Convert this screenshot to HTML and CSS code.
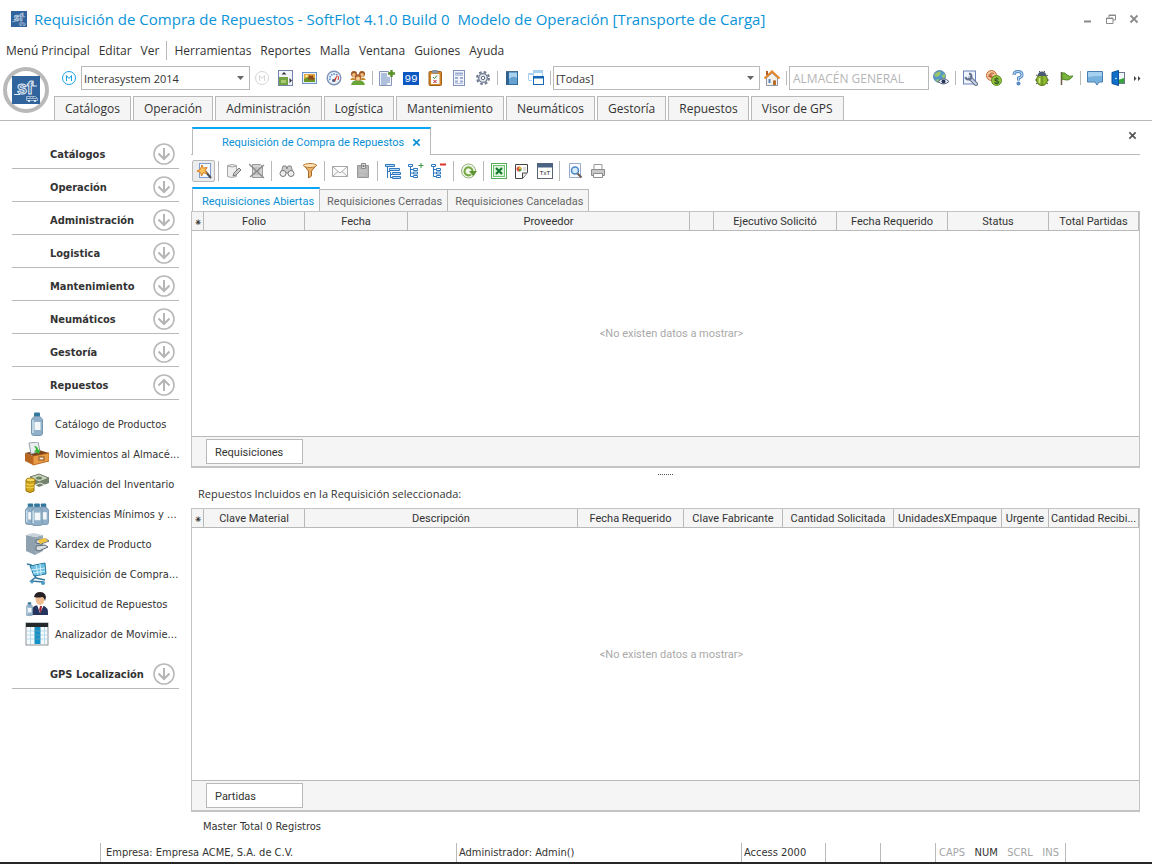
FILE: index.html
```
<!DOCTYPE html>
<html lang="es">
  <head>
    <title>Requisición de Compra de Repuestos - SoftFlot</title>
    <meta charset="utf-8" />
    <link rel="stylesheet" href="styles.css">
  </head>

  <body>
    <!-- shared symbols -->
    <svg class="defs" aria-hidden="true">
      <symbol id="logo" viewBox="0 0 28 28">
        <rect width="28" height="28" fill="#31639c" />
        <text x="5" y="18" font-family="Liberation Sans" font-size="18" font-weight="bold" fill="#31639c" stroke="#e3ebf3">sf</text>
        <path d="M2 18.500h6M21 10h4" stroke="#e3ebf3" />
        <path d="M14.500 20.500h9l2 2v2h-11zM15 22.500h10M18 20v3M21 20v3" fill="none" stroke="#9db6d0" />
        <circle cx="17" cy="25" r="1" fill="#fff" /><circle cx="23" cy="25" r="1" fill="#fff" />
      </symbol>
      <symbol id="down" viewBox="0 0 22 22">
        <circle cx="11" cy="11" r="10" fill="none" stroke="#b9b9b9" stroke-width="1.600" />
        <path d="M11 5v10M5.500 10.500l5.500 5.500 5.500-5.500" fill="none" stroke="#b5b5b5" stroke-width="2" />
      </symbol>
      <symbol id="up" viewBox="0 0 22 22">
        <circle cx="11" cy="11" r="10" fill="none" stroke="#b9b9b9" stroke-width="1.600" />
        <path d="M11 17V7M5.500 11.500L11 6l5.500 5.500" fill="none" stroke="#b5b5b5" stroke-width="2" />
      </symbol>
      <symbol id="close" viewBox="0 0 10 10">
        <path d="M1.500 1.500l7 7M8.500 1.500l-7 7" fill="none" stroke="currentColor" stroke-width="1.800" />
      </symbol>
      <symbol id="bottle" viewBox="0 0 12 24">
        <rect x="3" y="0.500" width="6" height="4" rx="1" fill="#33779d" />
        <path d="M3 4.500h6l2.500 3V21q0 2.500-2.500 2.500H3Q.5 23.500.5 21V7.500z" fill="#8fb0c8" stroke="#7897ae" />
        <path d="M2 8v13" stroke="#cfe0ec" stroke-width="1.500" />
        <rect x="3.500" y="10" width="6" height="8" fill="#f4f7fa" />
      </symbol>
    </svg>

    <header>
      <div class="titlebar">
        <svg class="app-icon"><use href="#logo" /></svg>
        <h1>Requisición de Compra de Repuestos - SoftFlot 4.1.0 Build 0&nbsp; Modelo de Operación [Transporte de Carga]</h1>
        <div class="window-buttons">
          <button type="button" aria-label="Minimizar"><svg viewBox="0 0 10 10"><path d="M1 7.500h7" stroke="#8a8a8a" stroke-width="2" /></svg></button>
          <button type="button" aria-label="Restaurar"><svg viewBox="0 0 10 10"><path d="M3 3V1h6.500v5H7M3 1.500h6.500M.5 4H7v5.500H.5zM.5 4.500H7" fill="none" stroke="#8a8a8a" /></svg></button>
          <button type="button" aria-label="Cerrar"><svg><use href="#close" /></svg></button>
        </div>
      </div>

      <nav class="menu">
        <a href="#">Menú Principal</a>
        <a href="#">Editar</a>
        <a href="#">Ver</a>
        <span class="menu-sep"></span>
        <a href="#">Herramientas</a>
        <a href="#">Reportes</a>
        <a href="#">Malla</a>
        <a href="#">Ventana</a>
        <a href="#">Guiones</a>
        <a href="#">Ayuda</a>
      </nav>

      <div class="ribbon">
        <div class="brand"><svg><use href="#logo" /></svg></div>
        <div class="ribbon-main">
          <div class="toolbar">
            <button type="button" aria-label="Modelo"><svg viewBox="0 0 16 16"><circle cx="8" cy="8" r="6.500" fill="none" stroke="#1ba1e2" /><path d="M5.500 11V5.500L8 8.500l2.500-3V11" fill="none" stroke="#1ba1e2" /></svg></button>
            <select class="combo combo-model" aria-label="Modelo de operación"><option>Interasystem 2014</option></select>
            <button type="button" disabled aria-label="Modelo inactivo"><svg viewBox="0 0 16 16"><circle cx="8" cy="8" r="6.500" fill="none" stroke="#d5d5d5" /><path d="M5.500 11V5.500L8 8.500l2.500-3V11" fill="none" stroke="#d5d5d5" /></svg></button>
            <button type="button" aria-label="Tamaño"><svg viewBox="0 0 16 16"><rect x=".5" y=".5" width="14" height="15" fill="#f2f4fb" stroke="#7483ae" /><rect x="1" y="7" width="9" height="8" fill="#74a441" /><rect x="3" y="10" width="5" height="3" fill="#a7ca73" /><path d="M3.500 4.500L6 2l2.500 2.500zM11.500 8l2.500 2.500-2.500 2.500z" fill="#333" /></svg></button>
            <button type="button" aria-label="Imagen"><svg viewBox="0 0 16 16"><rect x=".5" y="2.500" width="14" height="11" fill="#eaf0fa" stroke="#6d93c6" /><rect x="2" y="4" width="11" height="8" fill="#e2a63b" /><path d="M2 9l4-2 4 3 3-2v4H2z" fill="#6a9429" /><path d="M7 5l2 1 2-1v2l2 2-3 1-2-1-2 1z" fill="#8c4a1c" /><circle cx="4.500" cy="6" r="1.200" fill="#fff3b0" /></svg></button>
            <button type="button" aria-label="Tablero"><svg viewBox="0 0 16 16"><circle cx="8" cy="8" r="6.800" fill="#eef4fb" stroke="#7f92b5" stroke-width="1.400" /><path d="M4 10a4.500 4.500 0 0 1 7-5" fill="none" stroke="#4d88cc" stroke-width="1.500" stroke-dasharray="1.500 1" /><path d="M7 11l5-7-3 8z" fill="#d9351f" /><path d="M12 6q1 2 0 4" fill="none" stroke="#c33" /><circle cx="7.500" cy="10.500" r="1.500" fill="#4f5f82" /></svg></button>
            <button type="button" aria-label="Usuarios"><svg viewBox="0 0 16 16"><path d="M0 10q3-5 6 0zM10 10q3-5 6 0z" fill="#c98b2c" /><circle cx="4" cy="4" r="3" fill="#9d5623" /><circle cx="12" cy="4" r="3" fill="#9d5623" /><circle cx="4" cy="5" r="1.900" fill="#f0bc80" /><circle cx="12" cy="5" r="1.900" fill="#f0bc80" /><path d="M1 15q1-5 7-5t7 5z" fill="#6ba538" /><circle cx="8" cy="7.500" r="3.300" fill="#aa6027" /><circle cx="8" cy="8.600" r="2.200" fill="#f5c992" /></svg></button>
            <span class="sep"></span>
            <button type="button" aria-label="Nuevo"><svg viewBox="0 0 16 16"><path d="M.5 1.500h9l3 3v11H.5z" fill="#f2f4fa" stroke="#8694b8" /><path d="M2 4h6M2 6h6M2 8h9M2 10h9M2 12h9M2 14h6" stroke="#6c8cc0" /><path d="M12.500 0v7M9 3.500h7" stroke="#589025" stroke-width="2.400" /></svg></button>
            <button type="button" aria-label="Contador"><svg viewBox="0 0 16 16"><rect y="2" width="16" height="13" fill="#0b57c2" /><text x="8" y="12" text-anchor="middle" font-family="Liberation Mono" font-size="11" fill="#f4f8ff">99</text></svg></button>
            <button type="button" aria-label="Verificar"><svg viewBox="0 0 16 16"><rect x="2" y="1.500" width="12.500" height="14" rx="1" fill="#d48627" stroke="#9f5e19" /><rect x="4" y="4" width="8.500" height="10" fill="#f7f7f5" /><rect x="5" y="0" width="6" height="3.500" rx="1" fill="#8a929e" /><path d="M6 7l1.500 1.500L10 5.500" fill="none" stroke="#318a38" /><path d="M6.500 10l3 3M9.500 10l-3 3" stroke="#b23" /></svg></button>
            <button type="button" aria-label="Formulario"><svg viewBox="0 0 16 16"><rect x="2.500" y=".5" width="11" height="15" fill="#f4f6fc" stroke="#8091ba" /><path d="M4 3.500h8M4 11.500h3M9 11.500h3M4 8h3M9 8h3" stroke="#9aabd0" stroke-width="2" /><path d="M4 5.500h8M4 13.500h8" stroke="#b8c4df" /></svg></button>
            <button type="button" aria-label="Configuración"><svg viewBox="0 0 16 16"><circle cx="8" cy="8" r="6" fill="none" stroke="#6f7a91" stroke-width="2" stroke-dasharray="2.700 2" /><circle cx="8" cy="8" r="4.300" fill="#e4e8f0" stroke="#6f7a91" stroke-width="1.300" /><circle cx="8" cy="8" r="1.700" fill="#fff" stroke="#5f6b83" /></svg></button>
            <span class="sep"></span>
            <button type="button" aria-label="Libro"><svg viewBox="0 0 16 16"><path d="M2 1h2v14H2z" fill="#315f8b" /><rect x="4.500" y="1.500" width="9" height="13" fill="#67a1cf" stroke="#2d6b9f" /><path d="M5 3h8v5q-4-3-8 1z" fill="#a9d0ec" /><path d="M2 1.500h11" stroke="#4c6c8c" /></svg></button>
            <button type="button" aria-label="Ventanas"><svg viewBox="0 0 16 16"><rect x="5.500" y=".5" width="9" height="7" fill="#f6fbff" stroke="#a9d0ee" /><path d="M5 2h10" stroke="#a9d0ee" stroke-width="2" /><path d="M.5 10.500v-7H5" fill="none" stroke="#a9d0ee" /><path d="M0 4.500h5M1 10.500h3" stroke="#a9d0ee" /><rect x="5.500" y="6.500" width="10" height="8" fill="#fff" stroke="#1567b5" /><path d="M5 7.500h11" stroke="#1567b5" stroke-width="2" /></svg></button>
            <span class="sep"></span>
            <select class="combo combo-all" aria-label="Filtro"><option>[Todas]</option></select>
            <button type="button" aria-label="Inicio"><svg viewBox="0 0 16 16"><path d="M2.500 8L8 3l5.500 5v7.500h-11z" fill="#f5f2eb" stroke="#8f97a8" /><path d="M.5 8.500L8 1.500l7.500 7" fill="none" stroke="#e58a2b" stroke-width="2.200" /><path d="M3 1v4" stroke="#b45e2e" stroke-width="2" /><path d="M9 15v-4q1.500-2 3 0v4z" fill="#b96d2c" /><path d="M4 10h3M4 12h3M5.500 9v4" stroke="#5e83b9" /></svg></button>
            <span class="sep"></span>
            <input class="store" type="text" aria-label="Almacén" placeholder="ALMACÉN GENERAL" />
            <button type="button" aria-label="Vista web"><svg viewBox="0 0 16 16"><circle cx="6.500" cy="6.500" r="6" fill="#5599c8" stroke="#658ca7" /><path d="M3 3q4-3 5 0L6 6 3 7 1 5zM9 5l3-1v3l-2 2zM4 9l3 1-1 2.500-3-2z" fill="#9cc66a" /><path d="M5 11.500q5.500-5.500 11 0-5.500 5-11 0z" fill="#e6ebf2" stroke="#5b6680" /><circle cx="10.500" cy="11.500" r="2" fill="#26345a" /></svg></button>
            <span class="sep"></span>
            <button type="button" aria-label="Herramienta"><svg viewBox="0 0 16 16"><rect x="1.500" y="1" width="12" height="13" fill="#eef3fc" stroke="#6a82b7" /><path d="M8 8l6 6" stroke="#66738f" stroke-width="4" stroke-linecap="round" /><path d="M7 7l7 7" stroke="#c8d0e0" stroke-width="2" stroke-linecap="round" /><path d="M7 3.500A3 3 0 1 1 3.500 7" fill="none" stroke="#66738f" stroke-width="2" /></svg></button>
            <button type="button" aria-label="Monedas"><svg viewBox="0 0 16 16"><circle cx="5.500" cy="5.500" r="5" fill="#f4c79d" stroke="#c86a34" /><path d="M8 3.500Q4 2 4 5.500T8 7.500M2.500 5h4M2.500 6.500h4" fill="none" stroke="#b4552a" /><circle cx="10.500" cy="10.500" r="5" fill="#92c13e" stroke="#5e922a" /><text x="10.500" y="14" text-anchor="middle" font-family="Liberation Sans" font-size="9" font-weight="bold" fill="#29541a">$</text></svg></button>
            <button type="button" aria-label="Ayuda"><svg viewBox="0 0 16 16"><path d="M4 5q0-3.500 4-3.500T12 5Q12 7 8.500 8v2.500" fill="none" stroke="#4f86c0" stroke-width="3" /><path d="M4 5q0-3.500 4-3.500T12 5Q12 7 8.500 8v2.500" fill="none" stroke="#b5d5f2" stroke-width="1.200" /><circle cx="8.500" cy="13.500" r="1.700" fill="#5b91cb" stroke="#376ba8" stroke-width=".5" /></svg></button>
            <button type="button" aria-label="Depurar"><svg viewBox="0 0 16 16"><path d="M2 5l3 2M14 5l-3 2M1 10h3M15 10h-3M2 14l3-2M14 14l-3-2M5 1l2 2M11 1L9 3" stroke="#4d5c44" /><ellipse cx="8" cy="10" rx="5.500" ry="5.500" fill="#8db72f" stroke="#587821" /><path d="M3.500 6Q4 1.500 8 1.500T12.500 6z" fill="#4a5a73" /><path d="M8 6v9" stroke="#577820" /><path d="M5.500 8v5" stroke="#d4ea84" stroke-width="1.500" /></svg></button>
            <button type="button" aria-label="Bandera"><svg viewBox="0 0 16 16"><path d="M3.500 2v13" stroke="#6c5a48" stroke-width="1.500" /><path d="M4 3q3-1 5 2 2 2 6 1-2 3-5 4-3 0-6-1z" fill="#7cb33a" stroke="#4c8626" /></svg></button>
            <span class="sep"></span>
            <button type="button" aria-label="Mensajes"><svg viewBox="0 0 16 16"><path d="M.5 1.500h15v10.500h-3.500l-2 3-2-3H.5z" fill="#77b1de" stroke="#4a7eb0" /><path d="M1 2h14v4q-7 0-14 1z" fill="#a5d0ef" /></svg></button>
            <button type="button" aria-label="Salir"><svg viewBox="0 0 16 16"><rect x="6.500" y="2.500" width="7" height="11" fill="#f3f6f9" stroke="#6b7888" /><path d="M7 10l6-2v5H7z" fill="#39a53e" /><path d="M1 2.500L7.500.5v15L1 13.500z" fill="#0f6fc8" stroke="#0a4f97" /><circle cx="5" cy="8.500" r=".8" fill="#fff" /></svg></button>
            <button type="button" class="more" aria-label="Más"><svg viewBox="0 0 8 5"><path d="M1 0l2.500 2.500L1 5zM5 0l2.500 2.500L5 5z" fill="#444" /></svg></button>
          </div>

          <nav class="modules">
            <a href="#">Catálogos</a>
            <a href="#">Operación</a>
            <a href="#">Administración</a>
            <a href="#">Logística</a>
            <a href="#">Mantenimiento</a>
            <a href="#">Neumáticos</a>
            <a href="#">Gestoría</a>
            <a href="#">Repuestos</a>
            <a href="#">Visor de GPS</a>
          </nav>
        </div>
      </div>
    </header>

    <div class="workspace">
      <aside class="sidebar">
        <button type="button" class="group">Catálogos<svg><use href="#down" /></svg></button>
        <button type="button" class="group">Operación<svg><use href="#down" /></svg></button>
        <button type="button" class="group">Administración<svg><use href="#down" /></svg></button>
        <button type="button" class="group">Logistica<svg><use href="#down" /></svg></button>
        <button type="button" class="group">Mantenimiento<svg><use href="#down" /></svg></button>
        <button type="button" class="group">Neumáticos<svg><use href="#down" /></svg></button>
        <button type="button" class="group">Gestoría<svg><use href="#down" /></svg></button>
        <button type="button" class="group" aria-expanded="true">Repuestos<svg><use href="#up" /></svg></button>
        <ul class="items">
          <li><a href="#">
            <svg viewBox="0 0 24 24"><use href="#bottle" x="6" y="0" width="12" height="24" /></svg>
            <span>Catálogo de Productos</span></a></li>
          <li><a href="#">
            <svg viewBox="0 0 24 24"><path d="M0 11l8 3v9l-8-4z" fill="#b96620" /><path d="M8 14l16-3v8L8 23z" fill="#e99a45" stroke="#bd6c24" /><path d="M0 11l14-3 10 3-16 3z" fill="#7f451a" /><path d="M4 1l9-1 2 9-9 3z" fill="#e9edef" stroke="#9aa3a8" /><path d="M9 4q4 0 4 4l2-1-1 5-5-3 2-1q0-2-2-4z" fill="#35b433" /><rect x="14" y="15" width="5" height="3" fill="#f6e8cf" stroke="#865022" /></svg>
            <span>Movimientos al Almacé...</span></a></li>
          <li><a href="#">
            <svg viewBox="0 0 24 24"><path d="M5 5l9-3 10 4v5l-10 4-9-5z" fill="#74836d" /><path d="M5 5l9-3 10 4-10 4z" fill="#c8d2c0" stroke="#728069" /><ellipse cx="14" cy="6" rx="3" ry="1.500" fill="#6d8360" /><path d="M10 13l5-2 5 2" stroke="#e5ece0" fill="none" /><path d="M1 8h9v3l-1 2v6q-4 3-8 0v-6z" fill="#d2a719" stroke="#9c750e" /><ellipse cx="5.500" cy="8" rx="4.500" ry="2" fill="#f5d961" stroke="#a77f14" /><path d="M1 12q4 2 8 0M1 15q4 2 8 0" stroke="#f4d75a" fill="none" /></svg>
            <span>Valuación del Inventario</span></a></li>
          <li><a href="#">
            <svg viewBox="0 0 24 24"><use href="#bottle" x="0" y="1" width="11" height="22" /><use href="#bottle" x="13" y="1" width="11" height="22" /><use href="#bottle" x="6" y="1" width="12" height="23" /></svg>
            <span>Existencias Mínimos y ...</span></a></li>
          <li><a href="#">
            <svg viewBox="0 0 24 24"><path d="M10 5l8-2v16l-8 4z" fill="#9aabb7" /><path d="M1 3l9 2v18l-9-4z" fill="#8fa1ae" /><path d="M1 3l7-2 10 2-8 2z" fill="#c7d2d9" /><path d="M11 8l10-1 3 2-8 3-5-1zM11 14l9-1 3 2-9 4-3-1z" fill="#d7dde1" stroke="#5b6972" /><path d="M13 8l7-2 3 3-8 3z" fill="#f0c43d" /></svg>
            <span>Kardex de Producto</span></a></li>
          <li><a href="#">
            <svg viewBox="0 0 24 24"><path d="M2 2l4 1 5 13 9 2" fill="none" stroke="#36779c" stroke-width="1.500" /><path d="M5 4l15-3 1 11-12 2z" fill="#6cbfe2" stroke="#27789f" /><path d="M6 8l14-2M8 11l12-2M11 3l2 10M15 2l1 11" stroke="#d3f1fc" /><path d="M11 15l-5 4 12 1" fill="none" stroke="#36779c" stroke-width="1.500" /><circle cx="7" cy="20" r="1.500" fill="#4b9cc2" /><circle cx="18" cy="21" r="2" fill="#4b9cc2" /></svg>
            <span>Requisición de Compra...</span></a></li>
          <li><a href="#">
            <svg viewBox="0 0 24 24"><path d="M6 23q-1-9 7-10l4 0q7 2 6 10z" fill="#26335f" /><path d="M12 13l3 8 4-8z" fill="#fff" /><path d="M15 14l-1 4 2 3 1-7z" fill="#a72635" /><ellipse cx="15" cy="7" rx="4.500" ry="6" fill="#efbc91" /><path d="M9 5q1-5 6-5t6 5l-1 4q-1-4-3-4-4 1-8 0z" fill="#272125" /><use href="#bottle" x="1" y="10" width="7" height="14" /></svg>
            <span>Solicitud de Repuestos</span></a></li>
          <li><a href="#">
            <svg viewBox="0 0 24 24"><rect x="1" y="1" width="22" height="22" fill="#f7fafc" stroke="#8b9499" /><path d="M1 3h22" stroke="#24292c" stroke-width="4" /><path d="M9.500 5h6v17h-6z" fill="#1592c5" /><path d="M2 9h20M2 13h20M2 17h20M5.500 5v17M19.500 5v17" stroke="#b6dced" /><path d="M9.500 9h6M9.500 13h6M9.500 17h6" stroke="#0874a7" /></svg>
            <span>Analizador de Movimie...</span></a></li>
        </ul>
        <button type="button" class="group">GPS Localización<svg><use href="#down" /></svg></button>
      </aside>

      <main>
        <div class="doc-tabs">
          <div class="doc-tab">
            <span>Requisición de Compra de Repuestos</span>
            <button type="button" aria-label="Cerrar pestaña"><svg><use href="#close" /></svg></button>
          </div>
          <button type="button" class="doc-close" aria-label="Cerrar documento"><svg><use href="#close" /></svg></button>
        </div>

        <div class="doc-toolbar">
          <button type="button" class="active" aria-label="Asistente"><svg viewBox="0 0 16 16"><rect x="3.500" y=".5" width="11" height="14" fill="#f4f7fc" stroke="#7f9dce" /><path d="M9 8l6 7" stroke="#4d4d4d" stroke-width="2" /><path d="M6 2l1.300 3.200 3.700-.7-1.800 3 1.800 3-3.700-.7L5.500 13l-.8-3.500L1 8l3.500-1.800z" fill="#fbc55a" stroke="#d97b1f" /></svg></button>
          <span class="sep"></span>
          <button type="button" aria-label="Editar"><svg viewBox="0 0 16 16"><path d="M1.500 2.500q5-2 9 0v11q-5 2-9 0z" fill="#eee" stroke="#a5a5a5" /><path d="M1.500 3q5 2 9 0" fill="none" stroke="#a5a5a5" /><path d="M7 13l1-3 5-5 2 2-5 5z" fill="#ccc" stroke="#777" /></svg></button>
          <button type="button" aria-label="Eliminar"><svg viewBox="0 0 16 16"><path d="M3.500 1.500h8l2 2v11h-10z" fill="#d5d5d5" stroke="#9a9a9a" /><path d="M5 5h6M5 8h6M5 11h6" stroke="#aaa" /><path d="M0 1l15 14M15 2L1 14" stroke="#888" stroke-width="1.300" /></svg></button>
          <span class="sep"></span>
          <button type="button" aria-label="Buscar"><svg viewBox="0 0 16 16"><path d="M4 3h3l1 3 1-3h3l2 7H2z" fill="#ccc" stroke="#888" /><circle cx="4" cy="10.500" r="3" fill="#eee" stroke="#777" /><circle cx="12" cy="10.500" r="3" fill="#eee" stroke="#777" /></svg></button>
          <button type="button" aria-label="Filtrar"><svg viewBox="0 0 16 16"><path d="M1.500 2l5 6v7l3-2V8l5-6z" fill="#e9b067" stroke="#a96a29" /><ellipse cx="8" cy="2.500" rx="6.500" ry="2" fill="#fae0b4" stroke="#b87a37" /></svg></button>
          <span class="sep"></span>
          <button type="button" aria-label="Correo"><svg viewBox="0 0 16 16"><path d="M.5 3.500h15v10H.5zM.5 3.500L8 10l7.500-6.500M.5 13.500L6 8.500M15.500 13.500L10 8.500" fill="#fafafa" stroke="#a8a8a8" /></svg></button>
          <button type="button" aria-label="Nota"><svg viewBox="0 0 16 16"><path d="M2.500 2.500h11v12h-11z" fill="#b5b5b5" stroke="#999" /><path d="M4 7h8M4 9h8M4 12h6" stroke="#c8c8c8" /><path d="M6.500.5h4v5h-4z" fill="#ddd" stroke="#888" /><circle cx="8.500" cy="3" r="1" fill="#666" /></svg></button>
          <span class="sep"></span>
          <button type="button" aria-label="Árbol"><svg viewBox="0 0 16 16"><path d="M2.500 4v11M2.500 8.500H5M5.500 9v6M5 11.500h2M5 14.500h2" fill="none" stroke="#2d78c0" /><path d="M.5 1.500h9v2h-9zM4.500 5.500h10v2h-10zM7.500 9.500h8v2h-8zM7.500 13.500h8v2h-8z" fill="#b9d9f5" stroke="#2d78c0" /></svg></button>
          <button type="button" aria-label="Expandir"><svg viewBox="0 0 16 16"><path d="M2.500 4v9.500H6M2.500 6.500H6M2.500 10H6" fill="none" stroke="#2d78c0" /><path d="M.5 1.500h4v2h-4zM5.500 5.500h4v2h-4zM5.500 9h4v2h-4zM5.500 12.500h4v2h-4z" fill="#fff" stroke="#2d78c0" /><path d="M13 0v5M10.500 2.500h5" stroke="#3f9745" /></svg></button>
          <button type="button" aria-label="Contraer"><svg viewBox="0 0 16 16"><path d="M2.500 4v9.500H6M2.500 6.500H6M2.500 10H6" fill="none" stroke="#2d78c0" /><path d="M.5 1.500h4v2h-4zM5.500 5.500h4v2h-4zM5.500 9h4v2h-4zM5.500 12.500h4v2h-4z" fill="#fff" stroke="#2d78c0" /><path d="M9 1.500h6" stroke="#db332a" stroke-width="2" /></svg></button>
          <span class="sep"></span>
          <button type="button" aria-label="Actualizar"><svg viewBox="0 0 16 16"><circle cx="7.500" cy="8" r="7" fill="#f1f6ea" stroke="#94b17b" /><path d="M10 11.500A4 4 0 1 1 11.500 8" fill="none" stroke="#75a840" stroke-width="2" /><path d="M8 8h8l-4 5z" fill="#5f9430" /></svg></button>
          <span class="sep"></span>
          <button type="button" aria-label="Exportar a Excel"><svg viewBox="0 0 16 16"><rect x=".5" y=".5" width="15" height="15" fill="#fff" stroke="#55ad57" /><rect x="2.500" y="2.500" width="11" height="11" fill="#d9f2d9" stroke="#6cc26e" /><path d="M5 5l6 6M11 5l-6 6" stroke="#127b2c" stroke-width="2.200" /></svg></button>
          <button type="button" aria-label="Exportar reporte"><svg viewBox="0 0 16 16"><path d="M1.500 1.500h12v8l-5 6h-7z" fill="#fff" stroke="#444" /><path d="M8.500 15v-5H13" fill="#eee" stroke="#444" /><circle cx="5" cy="6" r="2.500" fill="#e5533f" /><path d="M5 6h2.500A2.500 2.500 0 0 1 5 8.500z" fill="#4ca94f" /><path d="M5 6V3.500A2.500 2.500 0 0 1 7.500 6z" fill="#eab33b" /><path d="M9 5h3M9 7h3" stroke="#bbb" /></svg></button>
          <button type="button" aria-label="Exportar a texto"><svg viewBox="0 0 16 16"><rect x=".5" y=".5" width="15" height="15" fill="#fff" stroke="#5b6470" /><path d="M0 2.500h16" stroke="#4a6384" stroke-width="4" /><text x="8" y="12" text-anchor="middle" font-family="Liberation Sans" font-size="6" fill="#222">TxT</text></svg></button>
          <span class="sep"></span>
          <button type="button" aria-label="Vista previa"><svg viewBox="0 0 16 16"><path d="M2.500.5h11v14h-11z" fill="#f8faff" stroke="#98abc9" /><circle cx="8" cy="7.500" r="3.500" fill="#d7ebfb" stroke="#4b85c4" stroke-width="1.500" /><path d="M10.500 10.500l4 4" stroke="#6c5b50" stroke-width="2" /></svg></button>
          <button type="button" aria-label="Imprimir"><svg viewBox="0 0 16 16"><path d="M4 7V1.500h8V7" fill="#fff" stroke="#999" /><path d="M1.500 6.500h13v6h-13z" fill="#c9c9c9" stroke="#8d8d8d" /><path d="M3.500 10.500h9v4h-9z" fill="#fff" stroke="#8d8d8d" /></svg></button>
        </div>

        <div class="sub-tabs">
          <a href="#" class="selected">Requisiciones Abiertas</a>
          <a href="#">Requisiciones Cerradas</a>
          <a href="#">Requisiciones Canceladas</a>
        </div>

        <section class="grid grid-top">
          <table>
            <colgroup>
              <col class="w-mark" /><col class="w-101" /><col class="w-103" /><col /><col class="w-24" /><col class="w-123" /><col class="w-111" /><col class="w-101" /><col class="w-90" />
            </colgroup>
            <thead>
              <tr>
                <th>⁕</th>
                <th>Folio</th>
                <th>Fecha</th>
                <th>Proveedor</th>
                <th></th>
                <th>Ejecutivo Solicitó</th>
                <th>Fecha Requerido</th>
                <th>Status</th>
                <th>Total Partidas</th>
              </tr>
            </thead>
          </table>
          <p class="empty">&lt;No existen datos a mostrar&gt;</p>
          <div class="levels"><button type="button">Requisiciones</button></div>
        </section>

        <div class="splitter"></div>
        <h2>Repuestos Incluidos en la Requisición seleccionada:</h2>

        <section class="grid grid-bottom">
          <table>
            <colgroup>
              <col class="w-mark" /><col class="w-101" /><col /><col class="w-106" /><col class="w-99" /><col class="w-111" /><col class="w-108" /><col class="w-47" /><col class="w-90" />
            </colgroup>
            <thead>
              <tr>
                <th>⁕</th>
                <th>Clave Material</th>
                <th>Descripción</th>
                <th>Fecha Requerido</th>
                <th>Clave Fabricante</th>
                <th>Cantidad Solicitada</th>
                <th>UnidadesXEmpaque</th>
                <th>Urgente</th>
                <th>Cantidad Recibi...</th>
              </tr>
            </thead>
          </table>
          <p class="empty">&lt;No existen datos a mostrar&gt;</p>
          <div class="levels"><button type="button">Partidas</button></div>
        </section>

        <p class="totals">Master Total 0 Registros</p>
      </main>
    </div>

    <footer>
      <div class="cell cell-first"></div>
      <div class="cell cell-company">Empresa: Empresa ACME, S.A. de C.V.</div>
      <div class="cell cell-user">Administrador: Admin()</div>
      <div class="cell cell-db">Access 2000</div>
      <div class="cell cell-small"></div>
      <div class="cell cell-small"></div>
      <div class="cell cell-keys"><span>CAPS</span><span class="on">NUM</span><span>SCRL</span><span>INS</span></div>
      <div class="cell cell-last"></div>
    </footer>
  </body>
</html>
```

FILE: styles.css
```
* {
  box-sizing: border-box;
}

body {
  margin: 0;
  min-height: 100vh;
  display: flex;
  flex-direction: column;
  background: #fff;
  color: #333;
  font-family: "Open Sans", "Segoe UI", sans-serif;
  font-size: 12px;
}

a {
  color: inherit;
  text-decoration: none;
}

button {
  padding: 0;
  border: none;
  background: none;
  color: inherit;
  font: inherit;
}

h1,
h2,
p,
ul {
  margin: 0;
  padding: 0;
  font-weight: normal;
  list-style: none;
}

svg {
  display: block;
  flex: none;
}

.defs {
  position: absolute;
  width: 0;
  height: 0;
}

/* title bar and menu */

.titlebar {
  display: flex;
  align-items: center;
  height: 37px;
  padding: 0 13px 0 11px;
}

.app-icon {
  width: 16px;
  height: 16px;
}

h1 {
  margin-left: 7px;
  color: #0a93d8;
  font-size: 15px;
  line-height: 20px;
  white-space: nowrap;
}

.window-buttons {
  display: flex;
  gap: 13px;
  margin-left: auto;
  color: #8a8a8a;
}

.window-buttons svg {
  width: 10px;
  height: 10px;
}

.menu {
  display: flex;
  align-items: center;
  gap: 9px;
  height: 27px;
  padding-left: 6px;
}

.menu-sep {
  width: 1px;
  height: 19px;
  margin: 0 -2px;
  background: #b9b9b9;
}

.ribbon {
  display: flex;
  height: 57px;
  border-bottom: 1px solid #b9b9b9;
}

.brand {
  display: flex;
  align-items: center;
  justify-content: center;
  width: 46px;
  height: 46px;
  margin: 3px 5px 0 3px;
  border: 4px solid #b9b9b9;
  border-radius: 50%;
}

.brand svg {
  width: 28px;
  height: 28px;
}

.ribbon-main {
  display: flex;
  flex: 1;
  flex-direction: column;
  justify-content: space-between;
}

.toolbar,
.doc-toolbar {
  display: flex;
  align-items: center;
}

.toolbar {
  height: 28px;
  padding: 0 9px 0 3px;
}

.toolbar button,
.doc-toolbar button {
  display: flex;
  align-items: center;
  justify-content: center;
  width: 24px;
  height: 22px;
}

.toolbar svg,
.doc-toolbar svg {
  width: 16px;
  height: 16px;
}

.toolbar .more {
  width: 12px;
}

.toolbar .more svg {
  width: 8px;
  height: 5px;
}

.sep {
  width: 1px;
  height: 14px;
  margin: 0 2px;
  background: #b9b9b9;
}

.combo,
.store {
  height: 24px;
  padding: 0 3px;
  border: 1px solid #b9b9b9;
  border-radius: 0;
  color: #333;
  font: inherit;
}

.combo {
  padding: 0 2px;
  appearance: none;
  background: #fff url("data:image/svg+xml,%3Csvg xmlns='http://www.w3.org/2000/svg' width='7' height='4'%3E%3Cpath d='M0 0h7L3.500 4z' fill='%23666'/%3E%3C/svg%3E") no-repeat right 5px center;
  font-size: 11px;
}

.combo-model {
  width: 169px;
}

.combo-all {
  flex: 1;
}

.store {
  width: 140px;
}

.store::placeholder {
  color: #b5b5b5;
}

.modules {
  display: flex;
  gap: 2px;
}

.modules a {
  padding: 1px 10px 0;
  border: 1px solid #b9b9b9;
  border-bottom: none;
  background: #f5f5f5;
  line-height: 22px;
}

/* sidebar */

.workspace {
  display: flex;
  flex: 1;
}

.sidebar {
  width: 167px;
  margin: 15px 12px 0;
  font-family: "DejaVu Sans Condensed", Tahoma, sans-serif;
  font-size: 11px;
}

.group {
  display: flex;
  align-items: center;
  justify-content: space-between;
  width: 100%;
  height: 33px;
  padding: 4px 4px 0 38px;
  border-bottom: 1px solid #b9b9b9;
  font-weight: bold;
  white-space: nowrap;
}

.group svg {
  width: 22px;
  height: 22px;
}

.items {
  padding: 9px 0 7px 13px;
}

.items a {
  display: flex;
  align-items: center;
  gap: 6px;
  height: 30px;
  white-space: nowrap;
}

.items svg {
  width: 24px;
  height: 24px;
}

/* document area */

main {
  display: flex;
  flex: 1;
  flex-direction: column;
  min-width: 0;
  padding: 6px 12px 0 0;
  font-family: Roboto, "Liberation Sans", sans-serif;
  font-size: 11px;
}

.doc-tabs {
  display: flex;
  align-items: center;
  height: 28px;
  border-bottom: 1px solid #b9b9b9;
}

.doc-tab {
  display: flex;
  align-items: center;
  gap: 8px;
  height: 28px;
  margin-left: 1px;
  padding: 2px 9px 0 29px;
  border: 1px solid #b9b9b9;
  border-top: 2px solid #0aa6f5;
  border-bottom: none;
  background: #fff;
  color: #0a8fd4;
}

.doc-tab svg,
.doc-close svg {
  width: 9px;
  height: 9px;
}

.doc-close {
  margin: 0 3px 10px auto;
  color: #555;
}

.doc-toolbar {
  height: 32px;
  padding-left: 1px;
}

.doc-toolbar button {
  width: 23px;
}

.doc-toolbar .sep {
  height: 20px;
  margin: 0 3px;
}

.doc-toolbar .active {
  border: 1px solid #b9b9b9;
  border-radius: 2px;
  background: #ececec;
}

.sub-tabs {
  display: flex;
  padding-left: 1px;
}

.sub-tabs a {
  margin-top: 2px;
  padding: 2px 5px 0 7px;
  border: 1px solid #b9b9b9;
  border-left: none;
  border-bottom: none;
  background: #f5f5f5;
  color: #666;
  line-height: 19px;
}

.sub-tabs .selected {
  margin-top: 0;
  padding: 3px 5px 0 9px;
  border-top: 2px solid #0aa6f5;
  border-left: 1px solid #b9b9b9;
  background: #fff;
  color: #0a8fd4;
}

.grid {
  display: flex;
  flex-direction: column;
  border: 1px solid #c3c3c3;
  border-bottom-width: 2px;
}

.grid-top {
  flex: 11;
}

.grid-bottom {
  flex: 13;
}

table {
  width: 100%;
  border-spacing: 0;
  table-layout: fixed;
}

th {
  height: 19px;
  padding: 2px 0 0;
  border-right: 1px solid #b9b9b9;
  border-bottom: 1px solid #b9b9b9;
  background: #f5f5f5;
  font-weight: normal;
  line-height: 16px;
  white-space: nowrap;
}

.w-mark { width: 12px; }
.w-24 { width: 24px; }
.w-47 { width: 47px; }
.w-90 { width: 90px; }
.w-99 { width: 99px; }
.w-101 { width: 101px; }
.w-103 { width: 103px; }
.w-106 { width: 106px; }
.w-108 { width: 108px; }
.w-111 { width: 111px; }
.w-123 { width: 123px; }

.empty {
  display: flex;
  flex: 1;
  align-items: center;
  justify-content: center;
  padding-left: 12px;
  color: #a9a9a9;
}

.levels {
  height: 30px;
  padding: 2px 14px;
  border-top: 1px solid #b9b9b9;
  background: #f5f5f5;
}

.levels button {
  width: 97px;
  height: 25px;
  padding: 2px 0 0 8px;
  border: 1px solid #b9b9b9;
  background: #fff;
  text-align: left;
}

.splitter {
  width: 15px;
  height: 7px;
  margin: 0 auto;
  border-bottom: 1px dotted #555;
}

h2 {
  margin: 10px 0 6px 7px;
  font-family: "Open Sans", "Segoe UI", sans-serif;
  font-size: 11px;
  line-height: 17px;
}

.totals,
footer {
  font-family: "DejaVu Sans Condensed", Tahoma, sans-serif;
  font-size: 11px;
}

.totals {
  padding: 7px 12px 8px;
  line-height: 16px;
}

/* status bar */

footer {
  display: flex;
  height: 21px;
  border-bottom: 2px solid #262626;
  line-height: 20px;
}

.cell {
  padding-left: 5px;
  border-left: 1px solid #b9b9b9;
  white-space: nowrap;
}

.cell-first {
  width: 100px;
  border-left: none;
}

.cell-company {
  flex: 355;
}

.cell-user {
  flex: 286;
  padding-left: 2px;
}

.cell-db {
  width: 84px;
  padding-left: 2px;
}

.cell-small {
  width: 55px;
}

.cell-keys {
  display: flex;
  justify-content: space-between;
  width: 130px;
  padding: 0 6px 0 3px;
  color: #a5a5a5;
}

.cell-keys .on {
  color: #333;
}

.cell-last {
  width: 87px;
}
```
